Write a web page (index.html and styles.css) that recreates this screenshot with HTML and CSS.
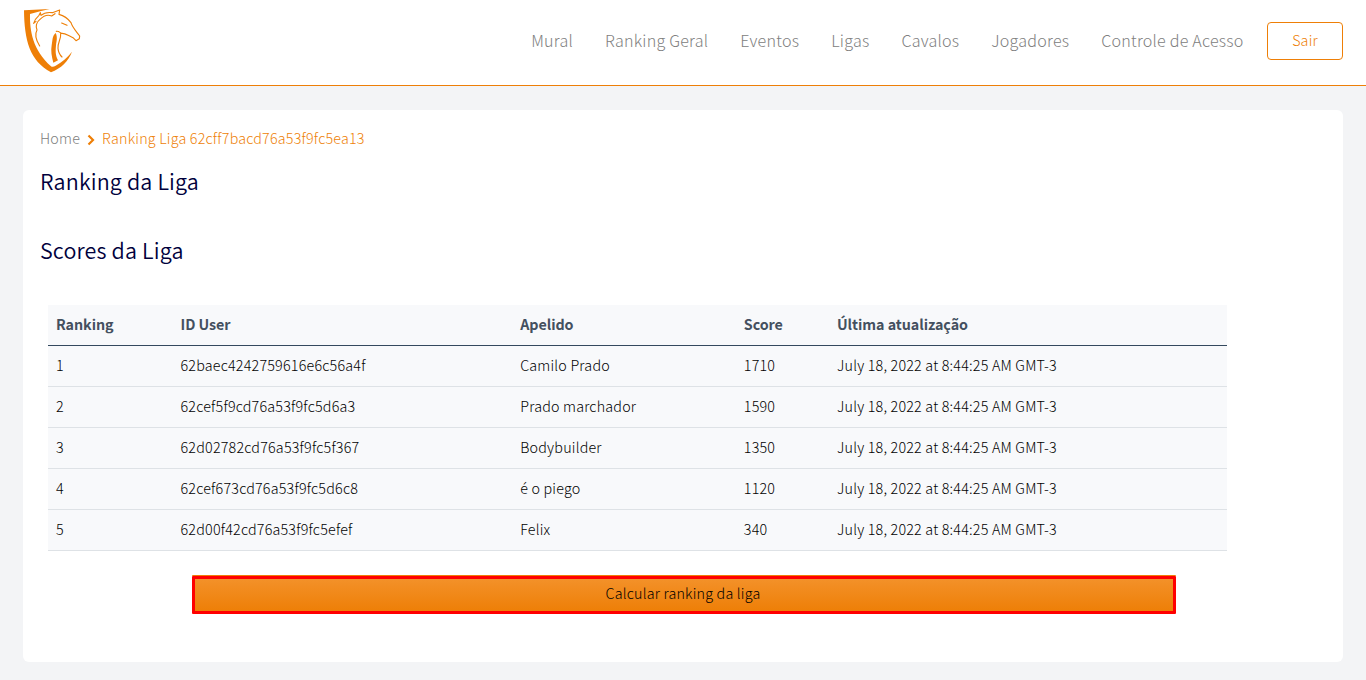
FILE: index.html
```html
<!DOCTYPE html>
<html lang="pt-BR">
<head>
<meta charset="utf-8">
<title>Ranking da Liga</title>
<link rel="stylesheet" href="styles.css">
</head>
<body>
<header class="topbar">
  <svg class="logo" viewBox="24 24 174 195" aria-label="Logo">
    <path class="solid" d="M27 31 L104 27 Q72 34 45 42 C44 92 53 150 108 199 C112 202 117 200 122 197 C142 186 158 172 171 155 C160 184 138 205 108 217 C44 183 28 120 27 31Z"/>
    <path class="solid" d="M122 99 C111 108 113 122 110 136 C107 152 110 170 115 188 L129 181 C120 164 122 150 123 136 C125 121 128 112 122 99Z"/>
    <path class="line" d="M76 38 L72 46 C63 54 58 61 56 70 L63 64 M76 38 L78 46 C86 39 98 36 112 38 L134 30 L132 43 C148 47 160 57 168 68 C173 84 184 94 194 108 L193 116 L183 122 L174 113 C158 106 150 99 140 100 C134 99 134 93 124 94 M75 58 C85 48 98 43 110 48 L120 41 M75 58 C64 66 61 80 66 90 C58 104 64 122 74 138 M140 69 L156 76 M137 101 C139 117 127 129 129 145 C130 157 134 164 141 171"/>
  </svg>
  <nav class="menu">
    <a>Mural</a><a>Ranking Geral</a><a>Eventos</a><a>Ligas</a><a>Cavalos</a><a>Jogadores</a><a>Controle de Acesso</a>
  </nav>
  <button class="logout">Sair</button>
</header>
<main class="card">
  <div class="crumbs"><span>Home</span>
    <svg class="chevron" viewBox="0 0 8 12"><path d="M1.5 1.5 L6 6 L1.5 10.5"/></svg>
    <span class="current">Ranking Liga 62cff7bacd76a53f9fc5ea13</span></div>
  <h1 class="title">Ranking da Liga</h1>
  <h2 class="title scores">Scores da Liga</h2>
  <table class="table">
    <colgroup><col class="c1"><col class="c2"><col class="c3"><col class="c4"><col></colgroup>
    <thead><tr><th>Ranking</th><th>ID User</th><th>Apelido</th><th>Score</th><th>Última atualização</th></tr></thead>
    <tbody>
      <tr><td>1</td><td>62baec4242759616e6c56a4f</td><td>Camilo Prado</td><td>1710</td><td>July 18, 2022 at 8:44:25 AM GMT-3</td></tr>
      <tr><td>2</td><td>62cef5f9cd76a53f9fc5d6a3</td><td>Prado marchador</td><td>1590</td><td>July 18, 2022 at 8:44:25 AM GMT-3</td></tr>
      <tr><td>3</td><td>62d02782cd76a53f9fc5f367</td><td>Bodybuilder</td><td>1350</td><td>July 18, 2022 at 8:44:25 AM GMT-3</td></tr>
      <tr><td>4</td><td>62cef673cd76a53f9fc5d6c8</td><td>é o piego</td><td>1120</td><td>July 18, 2022 at 8:44:25 AM GMT-3</td></tr>
      <tr><td>5</td><td>62d00f42cd76a53f9fc5efef</td><td>Felix</td><td>340</td><td>July 18, 2022 at 8:44:25 AM GMT-3</td></tr>
    </tbody>
  </table>
  <button class="calc">Calcular ranking da liga</button>
</main>
</body>
</html>
```
FILE: styles.css
```css
* { box-sizing: border-box; }
body { margin: 0; height: 680px; background: #f3f4f6; font-family: "Noto Sans CJK JP", "Noto Sans", sans-serif; font-weight: 300; font-size: 14.3px; line-height: 24px; letter-spacing: 0.2px; color: #000; }
button { font: inherit; letter-spacing: inherit; padding: 0; }
.topbar { height: 86px; background: #fff; border-bottom: 1px solid #ee7f07; display: flex; align-items: flex-start; padding: 8px 23px 0; }
.logo { width: 58px; height: 65px; }
.solid { fill: #ee7f07; }
.line { fill: none; stroke: #ee7f07; stroke-width: 3.4; stroke-linejoin: round; stroke-linecap: round; }
.menu { margin-left: auto; display: flex; gap: 32px; padding-top: 20px; font-size: 16.1px; letter-spacing: 0.22px; color: #808080; }
.logout { width: 76px; height: 38px; margin: 14px 0 0 23.4px; padding-bottom: 2px; border: 1px solid #ee7f07; border-radius: 4px; background: #fff; color: #ee7f07; }
.card { margin: 24px 23px 0; height: 552px; background: #fff; border-radius: 6px; padding: 16px 17px; }
.crumbs { display: flex; align-items: center; color: #808080; }
.current { color: #ee7f07; }
.chevron { width: 8px; height: 12px; margin: 3px 7px 0; }
.chevron path { fill: none; stroke: #ee7f07; stroke-width: 2.2; }
.title { margin: 13px 0 0; font-size: 21.5px; font-weight: 350; line-height: 36px; letter-spacing: 0.16px; color: #00003c; }
.scores { margin-top: 33px; }
.table { width: 1179px; margin: 37px 0 0 8px; border-collapse: separate; border-spacing: 0; table-layout: fixed; background: #f8f9fb; }
.table th, .table td { height: 41px; padding: 0 8px 2px; text-align: left; white-space: nowrap; border-bottom: 1px solid #dee2e6; }
.table th { font-weight: 700; letter-spacing: -0.05px; color: #44505f; border-color: #34495e; }
.c1 { width: 124.5px; }
.c2 { width: 339.7px; }
.c3 { width: 223.6px; }
.c4 { width: 93.2px; }
.calc { display: block; width: 984px; height: 38px; margin: 25px 0 0 152px; padding: 0 2px 5px 0; border: 3px solid #f00; border-radius: 1px; background: linear-gradient(#f39129, #ee7f07); box-shadow: 0 -1px 0 #ee7f07; color: #000; }
```
